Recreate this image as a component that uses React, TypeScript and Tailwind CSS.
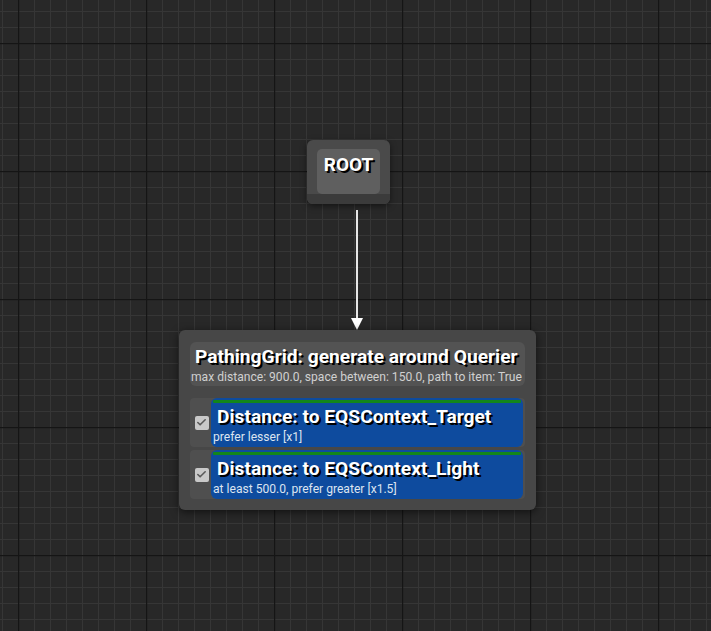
import { Check } from "lucide-react";

// ─── Canvas grid ──────────────────────────────────────────────────────────────

function GridBackground() {
  return (
    <svg className="absolute inset-0 h-full w-full" width="711" height="631">
      <defs>
        <pattern id="minor" x="2" y="11" width="16" height="16" patternUnits="userSpaceOnUse">
          <path d="M 0 0.5 H 16 M 0.5 0 V 16" stroke="#363636" strokeWidth="1" fill="none" />
        </pattern>
        <pattern id="major" x="18" y="43" width="128" height="128" patternUnits="userSpaceOnUse">
          <path d="M 0 0.5 H 128 M 0.5 0 V 128" stroke="#151515" strokeWidth="1.5" fill="none" />
        </pattern>
      </defs>
      <rect width="100%" height="100%" fill="#282828" />
      <rect width="100%" height="100%" fill="url(#minor)" />
      <rect width="100%" height="100%" fill="url(#major)" />
    </svg>
  );
}

// ─── Test row ─────────────────────────────────────────────────────────────────

function TestRow({ title, detail }: { title: string; detail: string }) {
  return (
    <div className="flex h-[49px] rounded-[4px] bg-[#4f4f4f]">
      <div className="flex w-[21px] items-center justify-center pl-[2px]">
        <div className="flex h-[14px] w-[14px] items-center justify-center rounded-[2px] bg-[#c9c9c9]">
          <Check size={11} strokeWidth={3.5} color="#5a5a5a" />
        </div>
      </div>
      <div className="mr-[2px] flex flex-1 flex-col rounded-[6px] bg-[#0e4b9e] px-[2px] pt-[2px]">
        <div className="h-[3px] rounded-[1px] bg-[#13861b]" />
        <div className="mt-[2px] pl-[4px] text-[19.2px] font-bold leading-[23px] text-white [text-shadow:2px_2px_0_#000]">
          {title}
        </div>
        <div className="mt-[1px] text-[12.1px] leading-[16px] text-[#dce4f0]">{detail}</div>
      </div>
    </div>
  );
}

// ─── App ──────────────────────────────────────────────────────────────────────

export default function App() {
  return (
    <div className="relative h-[631px] w-[711px] overflow-hidden font-['Roboto',sans-serif]">
      <GridBackground />

      {/* ROOT node */}
      <div className="absolute left-[307px] top-[140px] flex h-[64px] w-[83px] flex-col rounded-[6px] bg-[#4a4a4a] shadow-[0_2px_6px_rgba(0,0,0,0.5)]">
        <div className="mx-[10px] mt-[9px] flex h-[45px] items-start justify-center rounded-[5px] bg-[#5f5f5f] pt-[4px]">
          <span className="text-[19px] font-bold leading-[24px] text-white [text-shadow:2px_2px_0_#000]">ROOT</span>
        </div>
        <div className="mt-auto h-[10px] rounded-b-[6px] bg-[#3b3b3b]" />
      </div>

      {/* connection */}
      <svg className="absolute left-[345px] top-[210px]" width="24" height="122">
        <line x1="12" y1="0" x2="12" y2="110" stroke="#e6e6e6" strokeWidth="2" />
        <polygon points="6,108 18,108 12,120" fill="#ffffff" />
      </svg>

      {/* PathingGrid node */}
      <div className="absolute left-[179px] top-[330px] w-[357px] rounded-[6px] bg-[#474747] px-[11px] pb-[11px] pt-[12px] shadow-[0_2px_8px_rgba(0,0,0,0.6)]">
        <div className="flex h-[44px] flex-col rounded-[6px] bg-[#535353] pt-[2px]">
          <div className="pl-[5px] text-[19.2px] font-bold leading-[25px] text-white [text-shadow:2px_2px_0_#000]">
            PathingGrid: generate around Querier
          </div>
          <div className="pl-[1px] text-[12.1px] leading-[16px] text-[#d0d0d0]">
            max distance: 900.0, space between: 150.0, path to item: True
          </div>
        </div>
        <div className="mt-[12px] flex flex-col gap-[3px]">
          <TestRow title="Distance: to EQSContext_Target" detail="prefer lesser [x1]" />
          <TestRow title="Distance: to EQSContext_Light" detail="at least 500.0, prefer greater [x1.5]" />
        </div>
      </div>
    </div>
  );
}
